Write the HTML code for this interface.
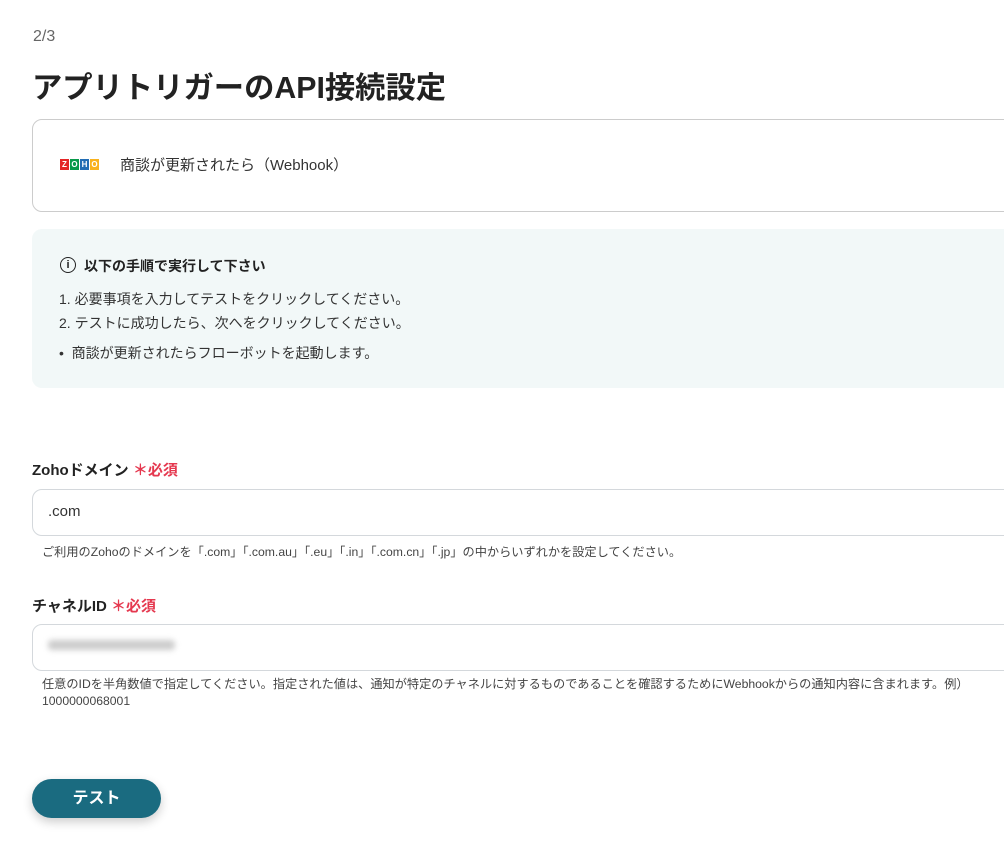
<!DOCTYPE html>
<html><head><meta charset="utf-8"><style>
body{margin:0;width:1004px;height:846px;background:#fff;font-family:"Liberation Sans","Noto Sans CJK JP",sans-serif;color:#222;position:relative;overflow:hidden}
.a{position:absolute}
.box{border:1px solid #d4d8dc;border-radius:10px;background:#fff}
.lbl{font-size:15px;font-weight:bold}
.req{color:#e5384f}
.hint{font-size:12.2px;color:#444}
</style></head><body>
<div class="a" style="left:33px;top:28px;font-size:16px;color:#666">2/3</div>
<div class="a" style="left:32px;top:63px;font-size:30.3px;font-weight:bold;color:#222">アプリトリガーのAPI接続設定</div>
<div class="a box" style="left:32px;top:119px;width:990px;height:91px;border-color:#ccc"></div>
<div class="a" style="left:60px;top:159px;height:12px;display:flex;gap:1px">
<span style="width:9px;height:11px;background:#e42527;color:#fff;font-size:8px;font-weight:bold;text-align:center;line-height:11px">Z</span>
<span style="width:9px;height:11px;background:#089949;color:#fff;font-size:8px;font-weight:bold;text-align:center;line-height:11px">O</span>
<span style="width:9px;height:11px;background:#226db4;color:#fff;font-size:8px;font-weight:bold;text-align:center;line-height:11px">H</span>
<span style="width:9px;height:11px;background:#f9b21d;color:#fff;font-size:8px;font-weight:bold;text-align:center;line-height:11px">O</span></div>
<div class="a" style="left:120px;top:154px;font-size:15px;color:#333">商談が更新されたら（Webhook）</div>
<div class="a" style="left:32px;top:229px;width:990px;height:159px;background:#f2f8f8;border-radius:10px"></div>
<div class="a" style="left:60px;top:257px;width:14px;height:14px;border:1.5px solid #222;border-radius:50%;font-size:11px;font-weight:bold;text-align:center;line-height:14px">i</div>
<div class="a" style="left:84px;top:256px;font-size:14px;font-weight:bold">以下の手順で実行して下さい</div>
<div class="a" style="left:59px;top:289px;font-size:14px;color:#333">1. 必要事項を入力してテストをクリックしてください。</div>
<div class="a" style="left:59px;top:313px;font-size:14px;color:#333">2. テストに成功したら、次へをクリックしてください。</div>
<div class="a" style="left:59px;top:343px;font-size:14px;color:#333">•&nbsp; 商談が更新されたらフローボットを起動します。</div>
<div class="a lbl" style="left:32px;top:459px">Zohoドメイン <span class="req">＊必須</span></div>
<div class="a box" style="left:32px;top:489px;width:990px;height:45px"></div>
<div class="a" style="left:48px;top:503px;font-size:15px;color:#333">.com</div>
<div class="a hint" style="left:42px;top:542px">ご利用のZohoのドメインを「.com」「.com.au」「.eu」「.in」「.com.cn」「.jp」の中からいずれかを設定してください。</div>
<div class="a lbl" style="left:32px;top:595px">チャネルID <span class="req">＊必須</span></div>
<div class="a box" style="left:32px;top:624px;width:990px;height:45px"></div>
<div class="a" style="left:48px;top:640px;width:127px;height:10px;background:#ccc;border-radius:4px;filter:blur(3px)"></div>
<div class="a hint" style="left:42px;top:676px;line-height:17px">任意のIDを半角数値で指定してください。指定された値は、通知が特定のチャネルに対するものであることを確認するためにWebhookからの通知内容に含まれます。例）<br>1000000068001</div>
<div class="a" style="left:32px;top:779px;width:129px;height:39px;background:#1a6b80;border-radius:20px;color:#fff;font-size:16px;font-weight:bold;text-align:center;line-height:39px;box-shadow:0 4px 10px rgba(0,0,0,.2)">テスト</div>
</body></html>
